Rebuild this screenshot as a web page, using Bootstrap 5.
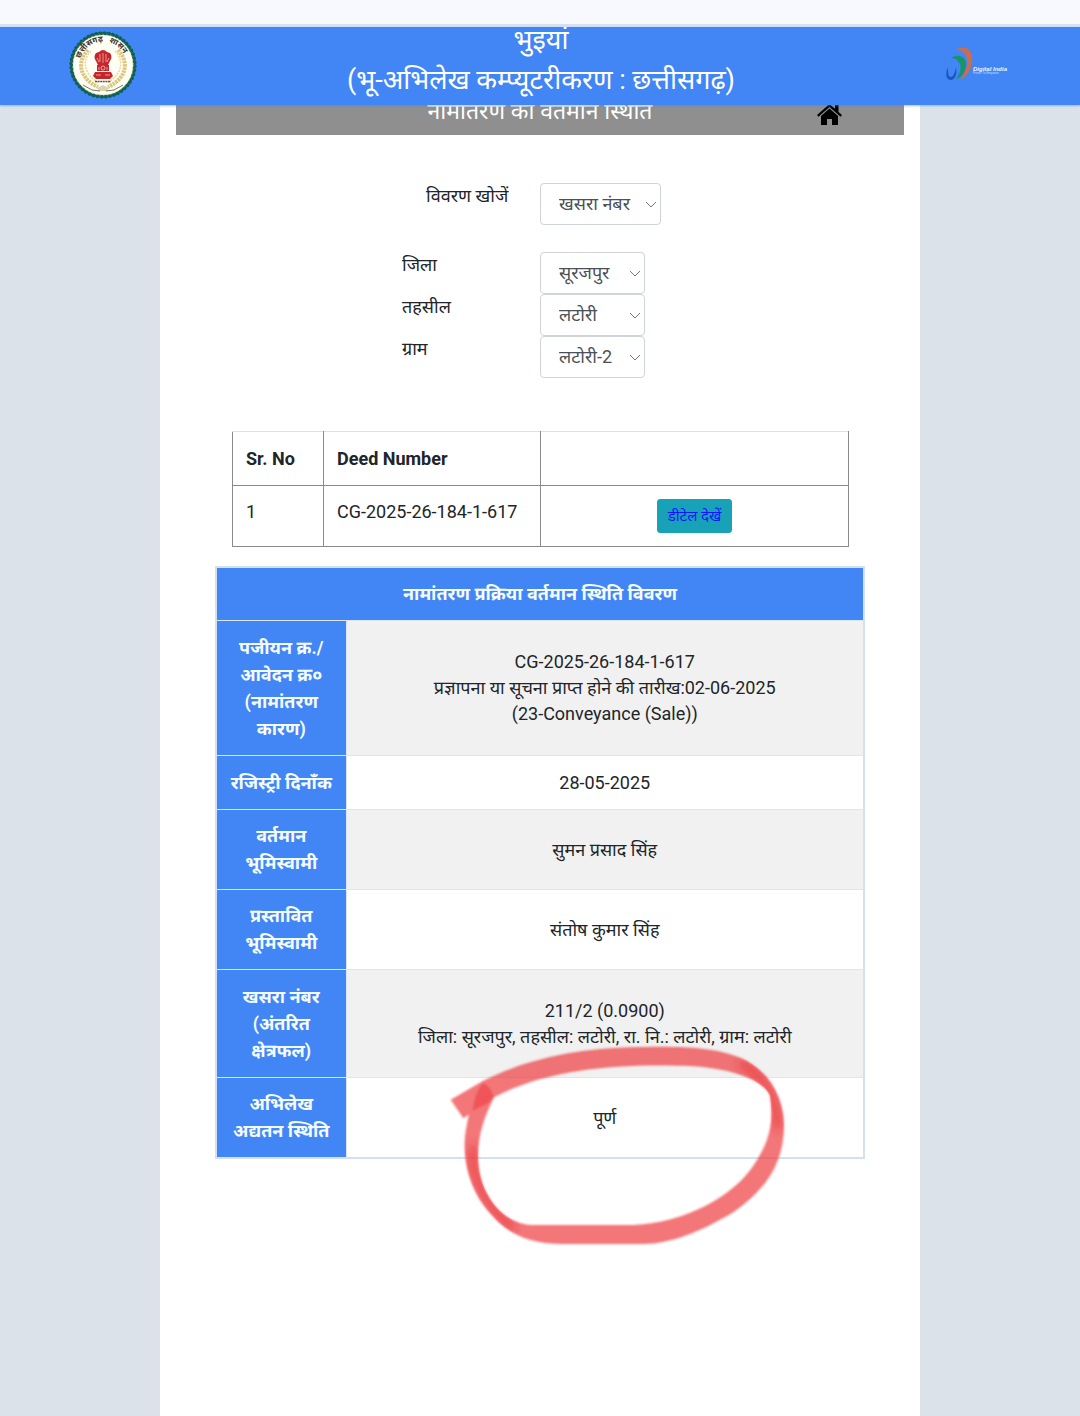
<!DOCTYPE html>
<html lang="hi">
<head>
<meta charset="utf-8">
<meta name="viewport" content="width=device-width, initial-scale=1">
<title>भुइयां</title>
<link href="https://cdn.jsdelivr.net/npm/bootstrap@5.3.0/dist/css/bootstrap.min.css" rel="stylesheet">
<style>
body{background:#dbe2ea;color:#212529;font-family:Roboto,"Noto Sans Devanagari","Noto Sans",sans-serif;font-size:18px;line-height:26px}
.top-strip{height:27px;background:#f8f9ff;border-bottom:3px solid #d6e2f4}
.site-head{height:78px;background:#4285f4;color:#fff;padding:0 67px 2px 69px;overflow:hidden}
.site-title{font-size:27px;line-height:40px;font-weight:400;margin:0;padding-bottom:10px}
.head-wrap{box-shadow:0 1px 2px rgba(66,133,244,.5);position:relative;z-index:2}
.side-logo{width:68px;flex:none}
.sheet{max-width:760px;min-height:1335px;background:#fff;padding:0 16px 32px}
.page-bar{background:#8f8f8f;color:#fff;height:54px;margin-top:-24px;position:relative}
.page-bar h2{font-size:23px;line-height:30px;font-weight:400;margin:0;padding-top:16px}
.home-link{position:absolute;right:62px;bottom:10px;line-height:0}
.search-form{margin:48px auto 0;width:276px}
.search-form label{width:138px}
.search-form .wide-row label{padding-left:24px}
.search-form .wide-row{margin-bottom:27px}
.search-form .form-select{width:105px;height:42px;font-size:18px;line-height:26px;padding:7px 31px 7px 18px;color:#495057;border:1px solid #ced4da;border-radius:4px;background-color:#fff;background-size:12px 12px;background-position:right 3px center;
background-image:url("data:image/svg+xml,%3csvg xmlns='http://www.w3.org/2000/svg' viewBox='0 0 12 12'%3e%3cpath fill='none' stroke='%23777' d='M1 4l5 5 5-5'/%3e%3c/svg%3e")}
.search-form .wide-row .form-select{width:121px;margin-right:-17px;padding-right:24px}
.deed-wrap{margin:53px 55px 0 56px}
.deed-table{margin:0;table-layout:fixed;border:1px solid #8a8a8a;border-top-color:#dee2e6;color:#212529}
.deed-table>:not(caption)>*>*{padding:13px;border:1px solid #8a8a8a;line-height:27px}
.deed-table>tbody>tr>td{line-height:26px}
.deed-table>thead>tr>th{border-top-color:#dee2e6;font-weight:700}
.deed-table .c1{width:91px}.deed-table .c2{width:217px}
.btn-detail{background:#17a2b8;color:#1414ff;font-size:15px;line-height:24px;padding:4px 10px;border:1px solid #17a2b8;border-radius:3px}
.btn-detail:hover{background:#138496;color:#1414ff}
.status-wrap{margin:19px 39px 0;position:relative}
.status-table{margin:0;table-layout:fixed;text-align:center;border:2px solid #d3e0ee;color:#212529}
.status-table>:not(caption)>*>*{padding:12px 13px 13px;border:1px solid #dbe6f0;vertical-align:middle;background:transparent;box-shadow:none}
.status-table>tbody>tr.tight>th{padding-bottom:12px}
.status-table>tbody>tr.roomy>th{padding-top:13px}
.status-table th{background:#4285f4!important;color:#f3fbff;font-weight:700;line-height:27px;white-space:nowrap}
.status-table td{padding:0 13px!important}
.status-table .c1{width:130px}
.status-table tbody tr:nth-child(odd) td{background:#f1f1f1}
.ring-mark{position:absolute;left:215px;top:463px;width:380px;height:230px;pointer-events:none}
</style>
<script src="https://cdn.jsdelivr.net/npm/bootstrap@5.3.0/dist/js/bootstrap.bundle.min.js"></script>
</head>
<body>
<div class="top-strip"></div>
<div class="head-wrap">
<header class="site-head d-flex justify-content-between align-items-center">
  <svg class="side-logo" height="68" viewBox="0 0 68 68" role="img" aria-label="छत्तीसगढ़ शासन">
    <circle cx="34" cy="34" r="31.5" fill="#fffef5"/>
    <circle cx="34" cy="34" r="31.5" fill="none" stroke="#17645c" stroke-width="3"/>
    <circle cx="34" cy="34" r="32.6" fill="none" stroke="#0d5f50" stroke-width="2" stroke-dasharray="2.4 1.87"/>
    <circle cx="34" cy="34" r="30" fill="none" stroke="#e8e49a" stroke-width="1" stroke-dasharray="1.6 2.2"/>
    <defs><path id="arcA" d="M11.500 27.500A23.500 23.500 0 0 1 36 10.600"/><path id="arcB" d="M40 11.300A23.500 23.500 0 0 1 57 29"/></defs>
    <text font-size="8" font-weight="700" fill="#33332c"><textPath href="#arcA">छत्तीसगढ़</textPath></text>
    <text font-size="8" font-weight="700" fill="#33332c"><textPath href="#arcB">शासन</textPath></text>
    <g fill="none" stroke="#dcc67d" stroke-width="4" stroke-dasharray="2.4 .8"><path d="M19 19C9 29 8 46 29 56"/><path d="M49 19C59 29 60 46 39 56"/></g>
    <g fill="none" stroke="#ead99b" stroke-width="1.6" stroke-dasharray="2 1"><path d="M22 20C13 29 14 43 30 52"/><path d="M46 20C55 29 54 43 38 52"/></g>
    <path d="M28 57l6-3 6 3-2 3H30z" fill="#d9d4b0"/>
    <path d="M14 54l9 5 8 1M54 54l-9 5-8 1" fill="none" stroke="#777a62"/>
    <g fill="#c5262c"><path d="M30 21q4-4 8 0l3 1q3 4 0 8l-2 4H29l-2-4q-3-4 0-8z"/><path d="M28 34h12v6H28z"/><path d="M26 41h16l2 4-3 3H27l-3-3z"/></g>
    <path d="M31 23v8M34 22v10M37 23v8M28 27l2 4M40 27l-2 4M27 44h5M36 44h5M30 36v3M38 36v3" stroke="#f0b5ad" stroke-width=".8"/>
    <circle cx="34" cy="37" r="2" fill="none" stroke="#f6d5cc" stroke-width=".7"/>
    <path d="M26 50.5h16" stroke="#555" stroke-width="1.5" stroke-dasharray="2 .6"/>
  </svg>
  <h1 class="site-title text-center">भुइयां<br>(भू-अभिलेख कम्प्यूटरीकरण : छत्तीसगढ़)</h1>
  <svg class="side-logo" height="40" viewBox="0 0 68 40" role="img" aria-label="Digital India">
    <path d="M9 6C19-2 29 5 27 17 26 26 21 32 15 35 21 27 24 18 21 11 18 5 13 4 9 6z" fill="#c96d52"/>
    <path d="M6 13c8-5 16-1 15 8-1 7-5 12-10 13 3-4 6-10 4-15-2-4-5-6-9-6z" fill="#179568"/>
    <path d="M3 22c-3 7-2 13 3 13 5-1 6-6 5-13-1 6-3 10-5 10-3 0-3-5-3-10z" fill="#1859bf"/>
    <text x="28" y="26" font-family="Liberation Sans" font-size="6" font-weight="700" font-style="italic" fill="#e8f5ff">Digital India</text>
    <text x="28" y="29" font-family="Liberation Sans" font-size="3" fill="#c3dcff">Power To Empower</text>
  </svg>
</header>
</div>
<main class="sheet mx-auto">
  <div class="page-bar text-center">
    <h2>नामांतरण की वर्तमान स्थिति</h2>
    <a class="home-link" href="#" aria-label="Home"><svg width="25" height="22" viewBox="0 0 25 22"><path d="M12.5 1L0 12l1.5 1.700L12.500 4l11 9.700L25 12l-3.500-3.100V2H18v3.800z"/><path d="M12.500 5.500L4 13v9h6v-6h5v6h6v-9z"/></svg></a>
  </div>
  <form class="search-form">
    <div class="wide-row d-flex align-items-start"><label for="kind" class="flex-shrink-0">विवरण खोजें</label><select id="kind" class="form-select flex-shrink-0"><option>खसरा नंबर</option></select></div>
    <div class="d-flex align-items-start"><label for="district">जिला</label><select id="district" class="form-select"><option>सूरजपुर</option></select></div>
    <div class="d-flex align-items-start"><label for="tehsil">तहसील</label><select id="tehsil" class="form-select"><option>लटोरी</option></select></div>
    <div class="d-flex align-items-start"><label for="village">ग्राम</label><select id="village" class="form-select"><option>लटोरी-21</option></select></div>
  </form>
  <div class="deed-wrap">
    <table class="table deed-table">
      <thead><tr><th class="c1">Sr. No</th><th class="c2">Deed Number</th><th></th></tr></thead>
      <tbody><tr><td>1</td><td>CG-2025-26-184-1-617</td><td class="text-center"><button type="button" class="btn btn-detail">डीटेल देखें</button></td></tr></tbody>
    </table>
  </div>
  <div class="status-wrap">
    <table class="table status-table">
      <colgroup><col class="c1"><col></colgroup>
      <thead><tr><th colspan="2">नामांतरण प्रक्रिया वर्तमान स्थिति विवरण</th></tr></thead>
      <tbody>
        <tr class="roomy"><th>पजीयन क्र./<br>आवेदन क्र०<br>(नामांतरण<br>कारण)</th><td>CG-2025-26-184-1-617<br>प्रज्ञापना या सूचना प्राप्त होने की तारीख:02-06-2025<br>(23-Conveyance (Sale))</td></tr>
        <tr class="roomy"><th>रजिस्ट्री दिनाँक</th><td>28-05-2025</td></tr>
        <tr><th>वर्तमान<br>भूमिस्वामी</th><td>सुमन प्रसाद सिंह</td></tr>
        <tr><th>प्रस्तावित<br>भूमिस्वामी</th><td>संतोष कुमार सिंह</td></tr>
        <tr class="roomy"><th>खसरा नंबर<br>(अंतरित<br>क्षेत्रफल)</th><td>211/2 (0.0900)<br>जिला: सूरजपुर, तहसील: लटोरी, रा. नि.: लटोरी, ग्राम: लटोरी</td></tr>
        <tr><th>अभिलेख<br>अद्यतन स्थिति</th><td>पूर्ण</td></tr>
      </tbody>
    </table>
    <svg class="ring-mark" viewBox="0 0 1140 690" aria-hidden="true">
      <defs>
        <filter id="soft"><feGaussianBlur stdDeviation="3"/></filter>
        <filter id="glow" x="-50%" y="-50%" width="200%" height="200%"><feGaussianBlur stdDeviation="14"/></filter>
        <clipPath id="ringClip"><path id="ring" d="M62 212L160 155C300 85 450 60 600 55C760 50 870 55 950 95C1030 140 1062 220 1062 290C1062 400 1010 480 910 550C810 610 720 645 640 645H400C280 645 220 605 165 535C105 455 95 360 110 290C120 230 138 190 158 163Q178 165 192 205C160 270 140 330 145 400C150 490 210 580 300 588H610C770 580 910 500 970 410C1025 330 1030 270 1020 200C1000 150 890 110 740 110C560 105 350 120 192 205L100 268Z"/></clipPath>
      </defs>
      <g filter="url(#soft)">
        <use href="#ring" fill="#ee3a3e" fill-opacity=".7"/>
        <path d="M158 163Q178 165 192 205L175 222L128 245Q135 190 158 163z" fill="#ee3034" fill-opacity=".45"/>
      </g>
      <g clip-path="url(#ringClip)"><g filter="url(#glow)" fill="none" stroke="#e82a2e" stroke-opacity=".6" stroke-width="24"><path d="M930 100Q1035 160 1045 300"/><path d="M130 350Q115 470 250 600"/></g></g>
    </svg>
  </div>
</main>
</body>
</html>
